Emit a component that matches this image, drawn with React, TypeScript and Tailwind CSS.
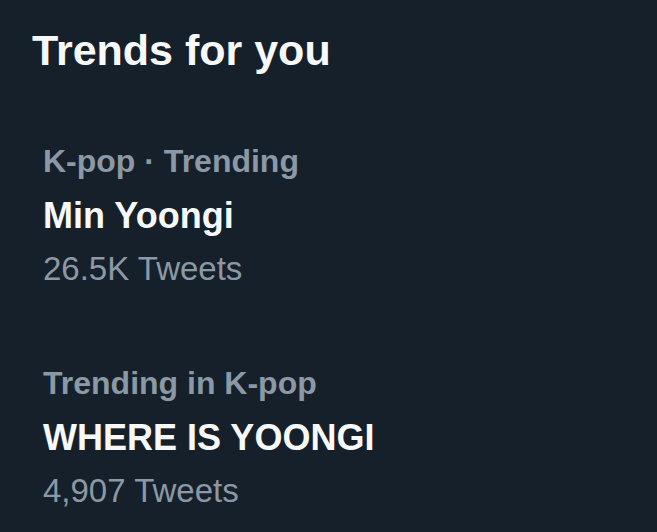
const trends = [
  { context: "K-pop · Trending", name: "Min Yoongi", count: "26.5K Tweets" },
  { context: "Trending in K-pop", name: "WHERE IS YOONGI", count: "4,907 Tweets" },
];

export default function App() {
  return (
    <div className="h-[532px] w-[657px] overflow-hidden bg-[#16202a] font-['Liberation_Sans',Arial,sans-serif]">
      <h2 className="px-[32px] pt-[24px] text-[43px] font-bold leading-[52px] text-[#f7f9f9]">
        Trends for you
      </h2>
      <div className="mt-[65px] flex flex-col gap-[74px] px-[43px]">
        {trends.map((trend) => (
          <div key={trend.name} className="flex flex-col">
            <p className="text-[32px] font-bold leading-[40px] text-[#8b98a5]">{trend.context}</p>
            <p className="mt-[9px] text-[36px] font-bold leading-[52px] text-[#f7f9f9]">{trend.name}</p>
            <p className="mt-[7px] text-[33px] leading-[40px] text-[#8b98a5]">{trend.count}</p>
          </div>
        ))}
      </div>
    </div>
  );
}
